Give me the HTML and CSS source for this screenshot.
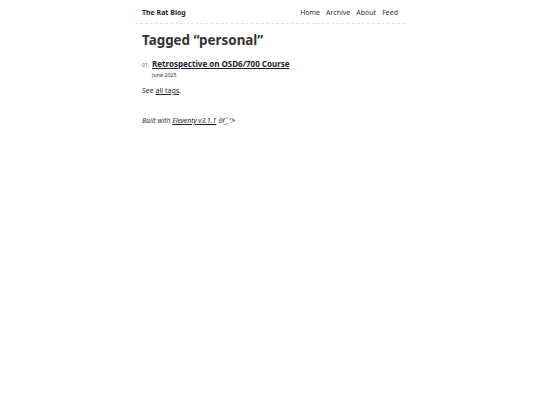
FILE: index.html
```html
<!DOCTYPE html>
<html lang="en">
<head>
<meta charset="utf-8">
<title>Tagged “personal”</title>
<link rel="stylesheet" href="styles.css">
</head>
<body>
<div class="page">
  <header class="header">
    <a class="home-link" href="#">The Rat Blog</a>
    <nav class="nav">
      <a href="#">Home</a>
      <a href="#">Archive</a>
      <a href="#">About</a>
      <a href="#">Feed</a>
    </nav>
  </header>
  <main class="main">
    <h1 class="title">Tagged “personal”</h1>
    <ol class="postlist">
      <li class="post">
        <span class="num">01.</span>
        <div class="post-body">
          <a class="post-link" href="#">Retrospective on OSD6/700 Course</a>
          <time class="post-date">June 2025</time>
        </div>
      </li>
    </ol>
    <p class="see">See <a href="#">all tags</a>.</p>
  </main>
  <footer class="footer">
    <em>Built with <a href="#">Eleventy v3.1.1</a> ᘛ⁐̤ᕐᐷ</em>
  </footer>
</div>
</body>
</html>
```
FILE: styles.css
```css
html, body { margin: 0; padding: 0; background: #fff; }
body {
  font-family: "Noto Sans", "Open Sans", sans-serif;
  color: #222;
}
a { color: #1a2330; }
.page { width: 270px; margin: 0 auto; }
.header {
  display: flex;
  justify-content: space-between;
  align-items: center;
  padding: 8px 7px 6px;
  border-bottom: 1px dashed #e4e4e4;
}
.home-link {
  font-size: 7px;
  font-weight: 700;
  text-decoration: none;
  color: #222;
}
.nav { display: flex; gap: 6px; }
.nav a { font-size: 7px; text-decoration: none; color: #333; }
.main { padding: 0 7px; }
.title {
  margin: 7px 0 8px;
  font-size: 13.4px;
  line-height: 19px;
  font-weight: 700;
  color: #333;
}
.postlist { list-style: none; margin: 0; padding: 0; }
.post { display: flex; align-items: flex-start; gap: 3px; }
.num { font-size: 5px; color: #555; line-height: 12px; padding-top: 1px; }
.post-body { display: flex; flex-direction: column; }
.post-link {
  font-size: 8px;
  font-weight: 700;
  line-height: 12px;
  color: #1a2330;
}
.post-date { font-size: 5.3px; color: #333; line-height: 8px; margin-top: 1px; }
.see { margin: 7px 0 0; font-size: 7px; line-height: 10px; color: #333; }
.footer {
  padding: 20px 7px;
  font-size: 6.8px;
  color: #333;
}
```
